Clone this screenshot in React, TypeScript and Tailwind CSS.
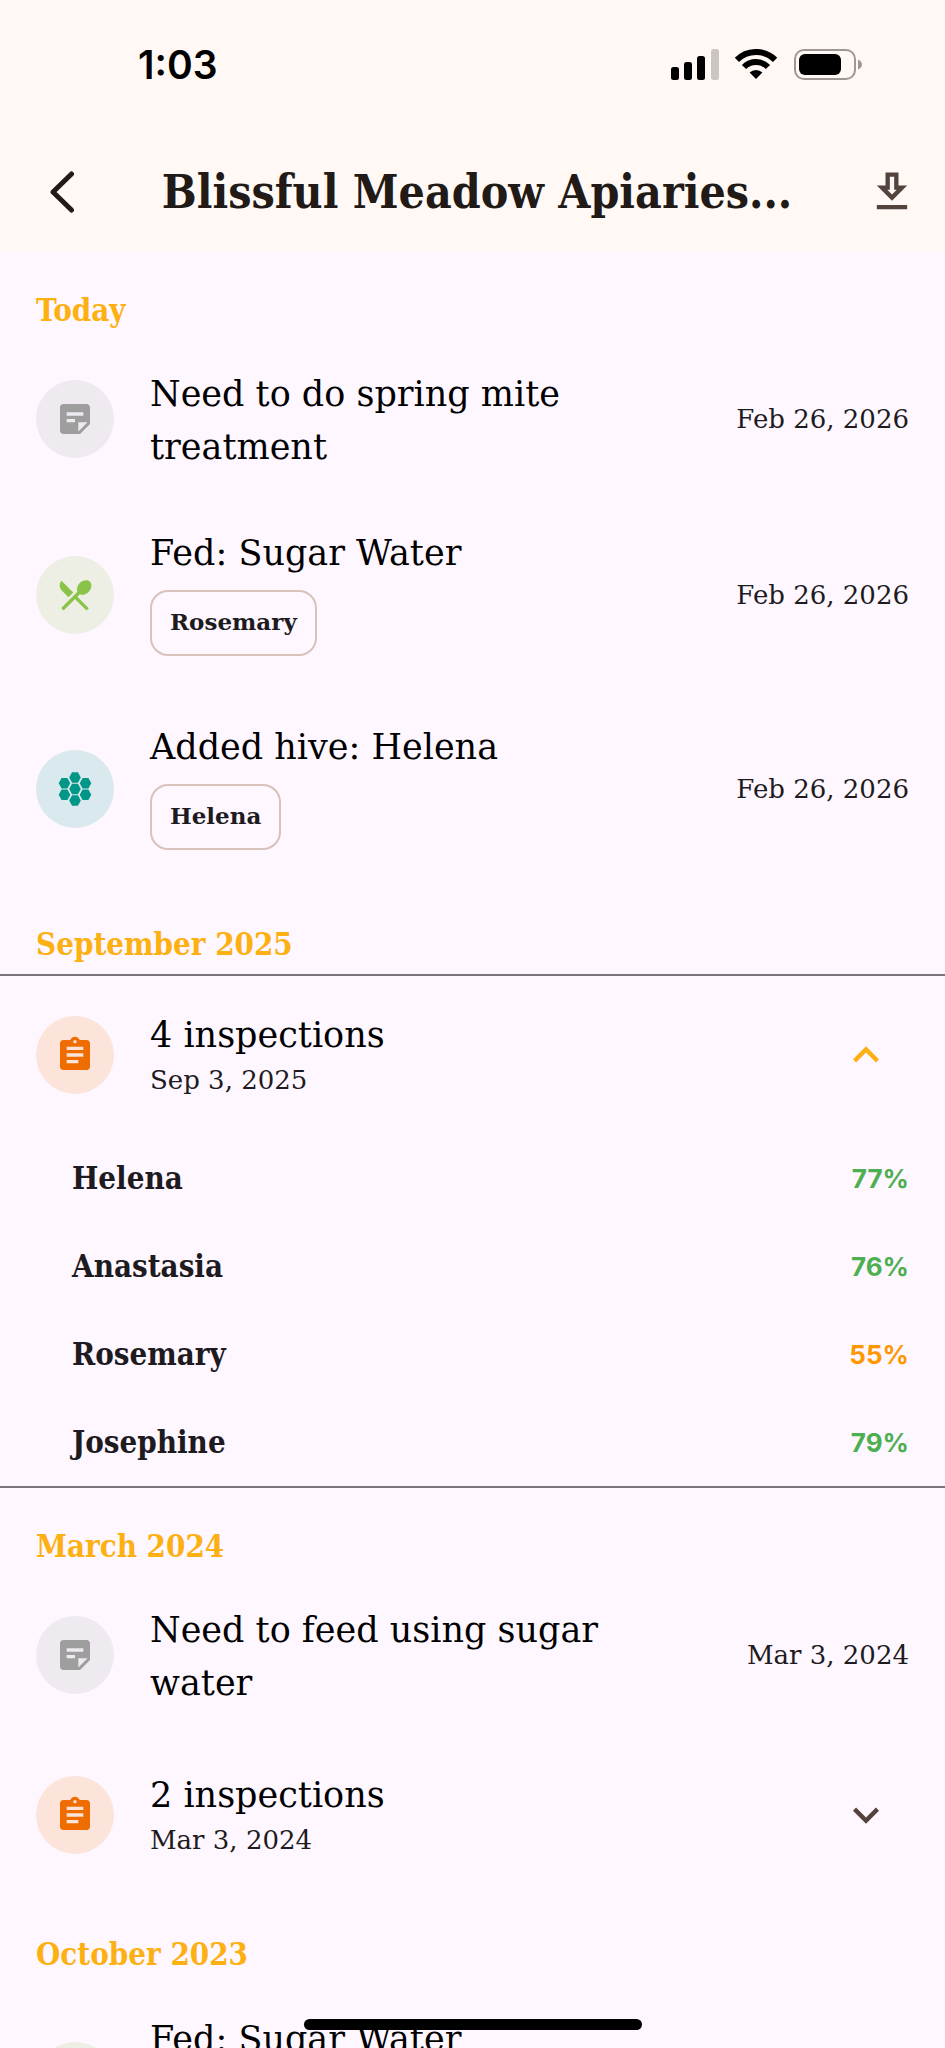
import React, { useState } from 'react';
import {
  MdAssignment,
  MdExpandLess,
  MdExpandMore,
  MdOutlineDownload,
  MdRestaurantMenu,
  MdStickyNote2,
} from 'react-icons/md';

type Kind = 'note' | 'feeding' | 'hive' | 'inspection';

type Score = { hive: string; score: number };

const HiveIcon: React.FC = () => {
  const cells = [
    [20, 20],
    [20, 8.5],
    [20, 31.5],
    [9.5, 14.3],
    [30.5, 14.3],
    [9.5, 25.7],
    [30.5, 25.7],
  ];

  return (
    <svg viewBox="0 0 40 40" className="size-10" fill="currentColor" aria-hidden="true">
      {cells.map(([x, y]) => (
        <path key={`${x}-${y}`} d="M-5.8 0L-2.9-5.2H2.9L5.8 0L2.9 5.2H-2.9Z" transform={`translate(${x} ${y})`} />
      ))}
    </svg>
  );
};

const kinds: Record<Kind, { icon: React.ReactNode; style: string }> = {
  note: { icon: <MdStickyNote2 className="size-10" />, style: 'bg-[#eeeaf0] text-[#9e9e9e]' },
  feeding: { icon: <MdRestaurantMenu className="size-10" />, style: 'bg-[#edefe5] text-[#8bc34a]' },
  hive: { icon: <HiveIcon />, style: 'bg-[#d9e9ed] text-[#009688]' },
  inspection: { icon: <MdAssignment className="size-10" />, style: 'bg-[#fce4da] text-[#ef6c00]' },
};

const Avatar: React.FC<{ kind: Kind }> = ({ kind }) => (
  <span className={`flex size-[78px] shrink-0 items-center justify-center rounded-full ${kinds[kind].style}`}>
    {kinds[kind].icon}
  </span>
);

const StatusBar: React.FC = () => (
  <div className="flex h-32 items-center justify-between pr-[82px] pl-[138px]">
    <span className="font-['Inter',sans-serif] text-[39px] leading-none font-semibold text-black">1:03</span>
    <svg width="192" height="31" viewBox="0 0 192 31" role="img" aria-label="Signal, Wi-Fi and battery">
      <rect x="0" y="18" width="8" height="13" rx="2.5" />
      <rect x="13" y="13" width="8" height="18" rx="2.5" />
      <rect x="26" y="7" width="8" height="24" rx="2.5" />
      <rect x="40" y="0" width="8" height="31" rx="2.5" fill="#cbc6c4" />
      <path d="M65.9 10.9A27 27 0 0 1 104.1 10.9M73 18A17 17 0 0 1 97 18" fill="none" stroke="#000" strokeWidth="6" />
      <path d="M78.6 23.6A9 9 0 0 1 91.4 23.6L85 30Z" />
      <rect x="124" y="1" width="60" height="29" rx="9" fill="none" stroke="#9d9896" strokeWidth="2" />
      <rect x="128" y="5" width="42" height="21" rx="6" />
      <path d="M187 10.500C189.500 11.500 191 13.500 191 15.500S189.500 19.500 187 20.500Z" fill="#9d9896" />
    </svg>
  </div>
);

const Header: React.FC = () => (
  <div className="flex h-31 items-center pt-1 pr-[27px] pl-9">
    <button type="button" aria-label="Back" className="flex h-20 w-[52px] shrink-0 items-center justify-center">
      <svg width="26" height="42" viewBox="0 0 26 42" fill="none" stroke="#211a16" strokeWidth="5" strokeLinecap="round" strokeLinejoin="round">
        <path d="M22.500 3L4 21L22.500 39" />
      </svg>
    </button>
    <h1 className="min-w-0 flex-1 truncate text-center font-['DejaVu_Serif_Condensed','DejaVu_Serif',serif] text-[46px] leading-[64px] font-bold text-[#211a16]">
      Blissful Meadow Apiaries...
    </h1>
    <button type="button" aria-label="Download" className="shrink-0 text-[#54433d]">
      <MdOutlineDownload className="size-[52px]" />
    </button>
  </div>
);

const SectionHeading: React.FC<{ children: React.ReactNode }> = ({ children }) => (
  <h2 className="px-9 pt-9 pb-2 font-['DejaVu_Serif_Condensed','DejaVu_Serif',serif] text-[31px] leading-[44px] font-bold text-[#fdb012]">
    {children}
  </h2>
);

const EventRow: React.FC<{ kind: Kind; title: string; date: string; hive?: string }> = ({ kind, title, date, hive }) => (
  <article className={`flex items-center gap-9 px-9 ${hive ? 'h-[194px]' : 'min-h-[158px]'}`}>
    <Avatar kind={kind} />
    <div className={`min-w-0 flex-1 ${hive ? 'pb-2' : 'pt-1'}`}>
      <h3 className="max-w-[480px] text-[35px] leading-[53px] text-black">{title}</h3>
      {hive && (
        <span className="mt-2.5 flex h-[66px] w-fit items-center rounded-[18px] border-2 border-[#d8c2b9] px-[18px] text-[23px] font-bold text-[#1d1b20]">
          {hive}
        </span>
      )}
    </div>
    <time className="shrink-0 text-[26px] leading-9 text-[#1d1b20]">{date}</time>
  </article>
);

const InspectionGroup: React.FC<{ title: string; date: string; scores: Score[]; defaultOpen?: boolean }> = ({
  title,
  date,
  scores,
  defaultOpen = false,
}) => {
  const [open, setOpen] = useState(defaultOpen);

  return (
    <article className={`border-y-2 ${open ? 'border-[#7a757c]' : 'border-transparent'}`}>
      <button
        type="button"
        aria-expanded={open}
        onClick={() => setOpen(!open)}
        className="flex h-[158px] w-full items-center gap-9 pr-[53px] pl-9 text-left"
      >
        <Avatar kind="inspection" />
        <span className="flex min-w-0 flex-1 flex-col pb-1">
          <span className="text-[35px] leading-[53px] text-black">{title}</span>
          <span className="text-[26px] leading-9 text-[#1d1b20]">{date}</span>
        </span>
        {open ? (
          <MdExpandLess className="size-[52px] text-[#fdb012]" />
        ) : (
          <MdExpandMore className="size-[52px] text-[#54433d]" />
        )}
      </button>
      {open && (
        <ul>
          {scores.map(({ hive, score }) => (
            <li key={hive} className="flex h-22 items-center justify-between pr-9 pl-[72px]">
              <span className="font-['DejaVu_Serif_Condensed','DejaVu_Serif',serif] text-[31px] leading-[44px] font-bold text-[#1d1b20]">
                {hive}
              </span>
              <span className={`font-['Inter',sans-serif] text-[26px] font-bold ${score >= 70 ? 'text-[#4caf50]' : 'text-[#ff9800]'}`}>
                {score}%
              </span>
            </li>
          ))}
        </ul>
      )}
    </article>
  );
};

const App: React.FC = () => {
  const septemberScores = [
    { hive: 'Helena', score: 77 },
    { hive: 'Anastasia', score: 76 },
    { hive: 'Rosemary', score: 55 },
    { hive: 'Josephine', score: 79 },
  ];

  const marchScores = [
    { hive: 'Helena', score: 81 },
    { hive: 'Rosemary', score: 74 },
  ];

  return (
    <div className="relative flex h-screen flex-col overflow-hidden bg-[#fef7ff] font-['DejaVu_Serif',serif]">
      <header className="shrink-0 bg-[#fff8f5]">
        <StatusBar />
        <Header />
      </header>

      <main className="min-h-0 flex-1 overflow-hidden">
        <section>
          <SectionHeading>Today</SectionHeading>
          <EventRow kind="note" title="Need to do spring mite treatment" date="Feb 26, 2026" />
          <EventRow kind="feeding" title="Fed: Sugar Water" date="Feb 26, 2026" hive="Rosemary" />
          <EventRow kind="hive" title="Added hive: Helena" date="Feb 26, 2026" hive="Helena" />
        </section>

        <section>
          <SectionHeading>September 2025</SectionHeading>
          <InspectionGroup title="4 inspections" date="Sep 3, 2025" scores={septemberScores} defaultOpen />
        </section>

        <section>
          <SectionHeading>March 2024</SectionHeading>
          <EventRow kind="note" title="Need to feed using sugar water" date="Mar 3, 2024" />
          <InspectionGroup title="2 inspections" date="Mar 3, 2024" scores={marchScores} />
        </section>

        <section>
          <SectionHeading>October 2023</SectionHeading>
          <EventRow kind="feeding" title="Fed: Sugar Water" date="Oct 8, 2023" hive="Rosemary" />
        </section>
      </main>

      {/* Home indicator floats over the list */}
      <div className="absolute bottom-[18px] left-1/2 h-[11px] w-[338px] -translate-x-1/2 rounded-full bg-black" />
    </div>
  );
};

export default App;
